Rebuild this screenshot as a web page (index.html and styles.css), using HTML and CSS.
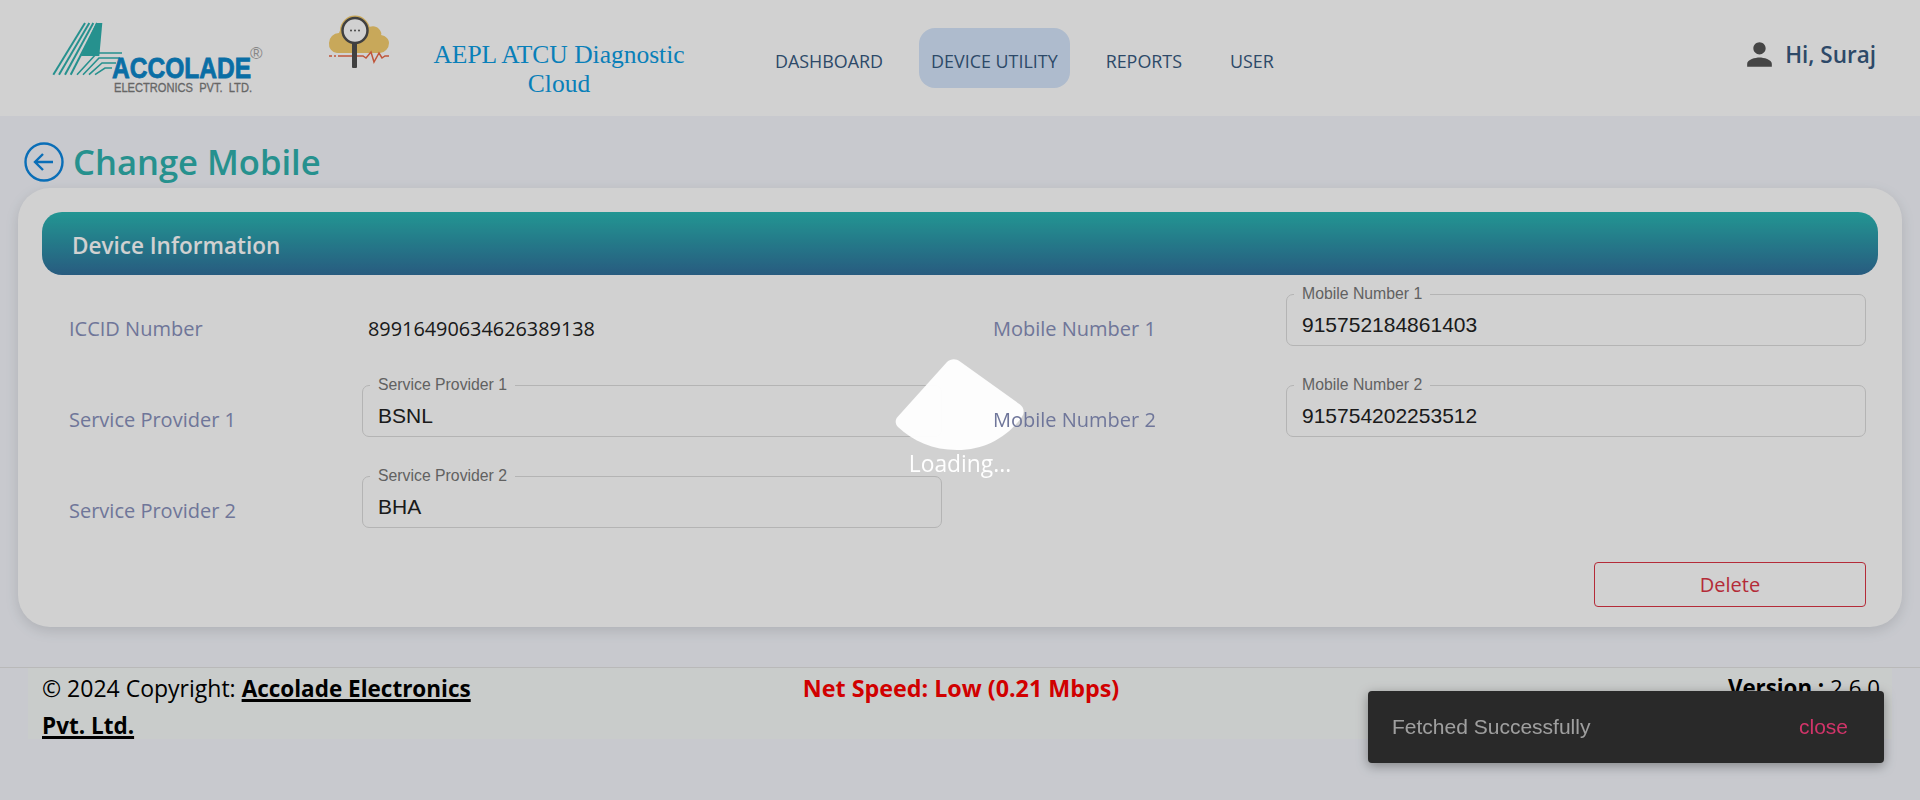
FILE: index.html
```html
<!DOCTYPE html>
<html lang="en">

<head>
    <meta charset="UTF-8">
    <meta name="viewport" content="width=device-width, initial-scale=1.0">
    <title>AEPL ATCU Diagnostic Cloud</title>
    <link rel="stylesheet" href="styles.css">
</head>

<body>
    <header class="topbar">
        <svg class="logo" viewBox="0 0 250 85" width="250" height="85">
            <g fill="none" stroke="#2fb1ae" stroke-width="2">
                <path d="M3.3 56.7 35 5" />
                <path d="M9 56.7 39.3 5" />
                <path d="M15 56.7 43.3 5" />
                <path d="M20.7 56.7 47.3 5" />
                <path d="M27 56.7 47 35 72 35" stroke-width="1.6" />
                <path d="M33 56.7 49 40 70 40" stroke-width="1.6" />
                <path d="M39 56.7 52 45 66 45" stroke-width="1.6" />
                <path d="M45 56.7 55 50 62 50" stroke-width="1.6" />
            </g>
            <path d="M46 5H52.3L49.3 38H31Z" fill="#2fb1ae" />
            <text class="logo-name" x="62" y="59.5" textLength="139" lengthAdjust="spacingAndGlyphs">ACCOLADE</text>
            <text class="logo-sub" x="64" y="74" textLength="138" lengthAdjust="spacingAndGlyphs">ELECTRONICS  PVT.  LTD.</text>
            <text class="logo-reg" x="200" y="41">®</text>
        </svg>

        <svg class="cloud" viewBox="0 0 80 65" width="80" height="65">
            <path d="M17 43a9 9 0 0 1-8-10 10 10 0 0 1 10-10c1-4 4-7 7-8h16c2 0 4 1 5 3 3-2 9-3 12 1 2 2 3 5 2 6 5 1 8 4 8 8a10 10 0 0 1-9 10Z" fill="#f5cd6e" />
            <circle cx="35" cy="20.5" r="15" fill="#f5cd6e" />
            <path d="M9 46h3M14 46h2M18 46h25l3 2 5-6 3 10 5-9 3 5 3-2h3H69" fill="none" stroke="#ea6a48" stroke-width="1.5" />
            <circle cx="35" cy="20.5" r="12.5" fill="#fff" stroke="#4f4f4f" stroke-width="2.5" />
            <rect x="32" y="32" width="5" height="26" rx="1" fill="#4f4f4f" />
            <g fill="#555">
                <circle cx="31" cy="20.5" r="1" />
                <circle cx="35" cy="20.5" r="1" />
                <circle cx="39" cy="20.5" r="1" />
            </g>
        </svg>

        <div class="brand-title">AEPL ATCU Diagnostic Cloud</div>

        <nav class="main-nav">
            <a href="#">DASHBOARD</a>
            <a href="#" class="active">DEVICE UTILITY</a>
            <a href="#">REPORTS</a>
            <a href="#">USER</a>
        </nav>

        <div class="user-box">
            <svg viewBox="0 0 24 24" width="37" height="37">
                <path d="M12 12c2.21 0 4-1.79 4-4s-1.79-4-4-4-4 1.79-4 4 1.79 4 4 4zm0 2c-2.67 0-8 1.34-8 4v2h16v-2c0-2.66-5.33-4-8-4z" fill="#555" />
            </svg>
            <span>Hi, Suraj</span>
        </div>
    </header>

    <div class="page-title">
        <svg viewBox="0 0 40 40" width="40" height="40">
            <circle cx="20" cy="20" r="18.5" fill="none" stroke="#0d87e0" stroke-width="2.4" />
            <path d="M29 20H11M19 12l-8 8 8 8" fill="none" stroke="#0d87e0" stroke-width="2.4" />
        </svg>
        <h1>Change Mobile</h1>
    </div>

    <main class="card">
        <div class="card-header">Device Information</div>

        <form class="info-grid">
            <div class="info-cell">
                <span class="info-label">ICCID Number</span>
                <span class="info-value">89916490634626389138</span>
            </div>
            <div class="info-cell">
                <span class="info-label">Mobile Number 1</span>
                <fieldset class="field">
                    <legend>Mobile Number 1</legend>
                    <input type="text" value="915752184861403">
                </fieldset>
            </div>
            <div class="info-cell">
                <span class="info-label">Service Provider 1</span>
                <fieldset class="field">
                    <legend>Service Provider 1</legend>
                    <input type="text" value="BSNL">
                </fieldset>
            </div>
            <div class="info-cell">
                <span class="info-label above-overlay">Mobile Number 2</span>
                <fieldset class="field">
                    <legend>Mobile Number 2</legend>
                    <input type="text" value="915754202253512">
                </fieldset>
            </div>
            <div class="info-cell">
                <span class="info-label">Service Provider 2</span>
                <fieldset class="field">
                    <legend>Service Provider 2</legend>
                    <input type="text" value="BHA">
                </fieldset>
            </div>
        </form>

        <div class="card-actions">
            <button type="button" class="btn-delete">Delete</button>
        </div>
    </main>

    <footer class="site-footer">
        <div class="footer-band">
            <div class="copyright">© 2024 Copyright: <a href="#">Accolade Electronics Pvt. Ltd.</a></div>
            <div class="net-speed">Net Speed: Low (0.21 Mbps)</div>
            <div class="version"><b>Version :</b> 2.6.0</div>
        </div>
    </footer>

    <div class="snackbar">
        <span>Fetched Successfully</span>
        <button type="button">close</button>
    </div>

    <div class="overlay">
        <svg class="spinner" viewBox="0 0 130 92" width="130" height="92">
            <path d="M52 3c4-3.500 9-3.500 13-.5l60 43c4 3 5 8 1.500 13C112 78 90 91 62 91 38 91 18 82 3 68c-3-3-3-7-.5-10Z" />
        </svg>
        <div class="loading-text">Loading...</div>
    </div>
</body>

</html>
```

FILE: styles.css
```css
body {
    margin: 0;
    background-color: #f4f6fc;
    font-family: 'Open Sans', sans-serif;
    color: #000;
    height: 800px;
    overflow: hidden;
}

/* top bar */
.topbar {
    display: flex;
    align-items: center;
    height: 116px;
    background-color: #fff;
    padding: 0 44px 0 50px;
    box-sizing: border-box;
}

.logo {
    flex: none;
    margin-top: 5px;
}

.logo-name {
    font-family: 'Liberation Sans', sans-serif;
    font-size: 29px;
    font-weight: bold;
    fill: #0d87ca;
    stroke: #0d87ca;
    stroke-width: 0.8px;
}

.logo-sub {
    font-family: 'Liberation Sans', sans-serif;
    font-size: 12.500px;
    fill: #7d7d7d;
    stroke: #7d7d7d;
    stroke-width: 0.3px;
    white-space: pre;
}

.logo-reg {
    font-family: 'Liberation Sans', sans-serif;
    font-size: 17px;
    fill: #a5a5a5;
}

.cloud {
    flex: none;
    margin: -32px 0 0 20px;
}

.brand-title {
    flex: none;
    width: 260px;
    margin: 22px 0 0 29px;
    font-family: 'Liberation Serif', serif;
    font-size: 25.500px;
    line-height: 29px;
    text-align: center;
    color: #0c9ce2;
}

.main-nav {
    display: flex;
    align-items: center;
    margin: 0 0 0 74px;
}

.main-nav a {
    padding: 23px 12px 17px;
    margin-right: 24px;
    font-size: 17.900px;
    line-height: 20px;
    color: #375a7f;
    text-decoration: none;
    border-radius: 16px;
}

.main-nav a.active {
    background-color: #d5e5fa;
}

.user-box {
    display: flex;
    align-items: center;
    gap: 7px;
    margin-left: auto;
    margin-top: -8px;
    font-size: 22.500px;
    font-weight: 600;
    color: #375a7f;
}

/* page title */
.page-title {
    display: flex;
    align-items: center;
    gap: 9px;
    height: 72px;
    padding: 20px 0 0 24px;
    box-sizing: border-box;
}

.page-title h1 {
    margin: -2px 0 0;
    font-size: 34.600px;
    font-weight: 600;
    color: #2fb1ae;
}

/* card */
.card {
    margin: 0 18px;
    padding: 24px 24px 20px;
    background-color: #fff;
    border-radius: 32px;
    box-shadow: 0 4px 14px rgba(0, 0, 0, 0.12);
}

.card-header {
    height: 63px;
    padding-left: 30px;
    border-radius: 20px;
    background: linear-gradient(180deg, #2ab7b3, #31709c);
    color: #fff;
    font-size: 22.500px;
    font-weight: 600;
    line-height: 67px;
}

.info-grid {
    display: grid;
    grid-template-columns: 873px 873px;
    column-gap: 51px;
    row-gap: 31px;
    padding: 11px 0 0 27px;
}

.info-cell {
    display: flex;
    align-items: center;
    height: 60px;
}

.info-label {
    flex: none;
    width: 293px;
    margin-top: 24px;
    font-size: 20px;
    color: #8890bb;
}

.above-overlay {
    position: relative;
    z-index: 30;
    color: #6f769a;
}

.info-value {
    margin: 24px 0 0 6px;
    font-size: 19.850px;
    color: #222;
}

.field {
    flex: none;
    width: 580px;
    height: 60px;
    margin: 0;
    padding: 0 15px;
    box-sizing: border-box;
    border: 1px solid #dcdcdc;
    border-radius: 7px;
    font-family: 'Liberation Sans', sans-serif;
}

.field legend {
    margin-left: -8px;
    padding: 0 8px;
    font-size: 15.800px;
    line-height: 16px;
    color: #777;
}

.field input {
    display: block;
    width: 100%;
    padding: 0;
    margin-top: 11px;
    border: none;
    outline: none;
    background: transparent;
    font-family: inherit;
    font-size: 21px;
    line-height: 24px;
    color: #222;
}

.card-actions {
    display: flex;
    justify-content: flex-end;
    padding: 34px 12px 0 0;
}

.btn-delete {
    width: 272px;
    height: 45px;
    background: transparent;
    border: 1px solid #dc3545;
    border-radius: 4px;
    color: #dc3545;
    font-family: inherit;
    font-size: 20px;
}

/* footer */
.site-footer {
    margin-top: 40px;
    border-top: 1px solid #e2e2e2;
}

.footer-band {
    display: grid;
    grid-template-columns: 1fr auto 1fr;
    height: 71px;
    margin: 0 28px;
    padding: 2px 12px 0 14px;
    box-sizing: border-box;
    background-color: #f6f9f8;
    font-size: 23px;
    line-height: 36px;
}

.copyright {
    max-width: 450px;
}

.copyright a {
    color: #000;
    font-size: 22.500px;
    font-weight: 700;
    text-decoration-thickness: 3px;
}

.net-speed {
    color: #ff0000;
    font-size: 23.300px;
    font-weight: 700;
}

.version {
    font-size: 22.300px;
    text-align: right;
}

/* snackbar */
.snackbar {
    position: fixed;
    right: 36px;
    bottom: 37px;
    display: flex;
    align-items: center;
    justify-content: space-between;
    width: 516px;
    height: 72px;
    padding: 0 36px 0 24px;
    box-sizing: border-box;
    background-color: #323232;
    border-radius: 4px;
    box-shadow: 0 3px 12px rgba(0, 0, 0, 0.35);
    font-family: 'Liberation Sans', sans-serif;
    font-size: 21px;
    color: rgba(255, 255, 255, 0.7);
}

.snackbar button {
    padding: 0;
    border: none;
    background: none;
    font: inherit;
    color: #ff4081;
}

/* loading overlay */
.overlay {
    position: fixed;
    inset: 0;
    z-index: 20;
    display: flex;
    flex-direction: column;
    align-items: center;
    justify-content: flex-start;
    padding-top: 359px;
    box-sizing: border-box;
    background-color: rgba(0, 0, 0, 0.18);
}

.spinner {
    display: block;
    fill: rgba(255, 255, 255, 0.94);
}

.loading-text {
    margin-top: -1px;
    font-size: 22.800px;
    line-height: 28px;
    color: #fff;
}
```
